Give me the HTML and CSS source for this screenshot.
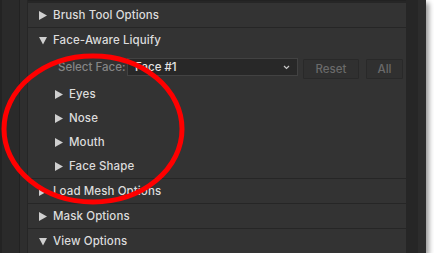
FILE: index.html
```html
<!DOCTYPE html>
<html>
<head>
<meta charset="utf-8">
<link rel="stylesheet" href="styles.css">
</head>
<body>
<div class="panel">
  <div class="gutter-a"></div>
  <div class="gutter-b"></div>
  <div class="content">
    <div class="row header"><svg class="tri" width="8" height="9" viewBox="0 0 8 9"><path d="M0 0 L8 4.5 L0 9 Z" fill="#cfcfcf"/></svg><span class="label">Brush Tool Options</span></div>
    <div class="section">
      <div class="row header plain"><svg class="tri" width="8" height="9" viewBox="0 0 8 9"><path d="M0 1 L8 1 L4 8.5 Z" fill="#cfcfcf"/></svg><span class="label">Face-Aware Liquify</span></div>
      <div class="select-row">
        <span class="select-label">Select Face:</span>
        <div class="dropdown"><span>Face #1</span>
          <svg class="chev" width="7" height="5" viewBox="0 0 7 5"><path d="M1 1 L3.5 3.5 L6 1" fill="none" stroke="#c8c8c8" stroke-width="1.2"/></svg>
        </div>
        <div class="btn reset">Reset</div>
        <div class="btn all">All</div>
      </div>
      <div class="sub"><svg class="tri" width="8" height="9" viewBox="0 0 8 9"><path d="M0 0 L8 4.5 L0 9 Z" fill="#cfcfcf"/></svg><span class="label">Eyes</span></div>
      <div class="sub"><svg class="tri" width="8" height="9" viewBox="0 0 8 9"><path d="M0 0 L8 4.5 L0 9 Z" fill="#cfcfcf"/></svg><span class="label">Nose</span></div>
      <div class="sub"><svg class="tri" width="8" height="9" viewBox="0 0 8 9"><path d="M0 0 L8 4.5 L0 9 Z" fill="#cfcfcf"/></svg><span class="label">Mouth</span></div>
      <div class="sub"><svg class="tri" width="8" height="9" viewBox="0 0 8 9"><path d="M0 0 L8 4.5 L0 9 Z" fill="#cfcfcf"/></svg><span class="label">Face Shape</span></div>
    </div>
    <div class="row header"><svg class="tri" width="8" height="9" viewBox="0 0 8 9"><path d="M0 0 L8 4.5 L0 9 Z" fill="#cfcfcf"/></svg><span class="label">Load Mesh Options</span></div>
    <div class="row header"><svg class="tri" width="8" height="9" viewBox="0 0 8 9"><path d="M0 0 L8 4.5 L0 9 Z" fill="#cfcfcf"/></svg><span class="label">Mask Options</span></div>
    <div class="row header last"><svg class="tri" width="8" height="9" viewBox="0 0 8 9"><path d="M0 1 L8 1 L4 8.5 Z" fill="#cfcfcf"/></svg><span class="label">View Options</span></div>
  </div>
  <div class="scroll-a"></div>
  <div class="scroll-b"></div>
  <svg class="ring" width="434" height="263" viewBox="0 0 434 263">
    <ellipse cx="93" cy="129" rx="89" ry="73" fill="none" stroke="#ff0000" stroke-width="5"/>
  </svg>
</div>
</body>
</html>
```
FILE: styles.css
```css
html, body { margin: 0; padding: 0; background: #ffffff; }
body { font-family: Inter, "Liberation Sans", sans-serif; }
.panel {
  position: relative;
  width: 426px;
  height: 253px;
  display: flex;
  background: #2b2b2b;
  box-shadow: 3px 3px 5px rgba(0,0,0,0.4);
}
.gutter-a { width: 17px; border-left: 2px solid #232323; border-right: 1px solid #222222; background: #2a2a2a; }
.gutter-b { width: 7px; border-right: 1px solid #262626; background: #2e2e2e; }
.content { width: 378px; padding-top: 2px; border-top: 1px solid #222; background: #262626; display: flex; flex-direction: column; }
.scroll-a { width: 12px; background: #262626; }
.scroll-b { width: 8px; background: #2c2c2c; }
.row { height: 24px; background: #333333; border-bottom: 1px solid #262626; display: flex; align-items: center; }
.row.last, .row.plain { border-bottom: none; }
.section { background: #333333; border-bottom: 1px solid #262626; }
.tri { display: block; flex: none; margin-right: 6px; }
.header { padding-left: 11px; }
.label { font-size: 11.5px; font-weight: 500; color: #dcdcdc; letter-spacing: 0.1px; }
.select-row { height: 30px; display: flex; align-items: center; padding-left: 30px; }
.select-label { font-size: 11.5px; font-weight: 500; color: #858585; width: 69px; }
.dropdown { height: 16px; border: 1px solid #424242; background: #282828; display: flex; align-items: center; justify-content: space-between; padding: 0 7px; width: 155px; margin-right: 5px; }
.dropdown span { font-size: 11.5px; font-weight: 500; color: #e4e4e4; }
.btn { height: 18px; border: 1px solid #292929; background: #303030; color: #6a6a6a; font-size: 11.5px; font-weight: 500; display: flex; align-items: center; justify-content: center; border-radius: 1px; margin-top: 3px; }
.btn.reset { width: 54px; margin-right: 7px; }
.btn.all { width: 35px; }
.sub { height: 24px; display: flex; align-items: center; padding-left: 27px; }
.ring { position: absolute; left: 0; top: 0; pointer-events: none; }
```
